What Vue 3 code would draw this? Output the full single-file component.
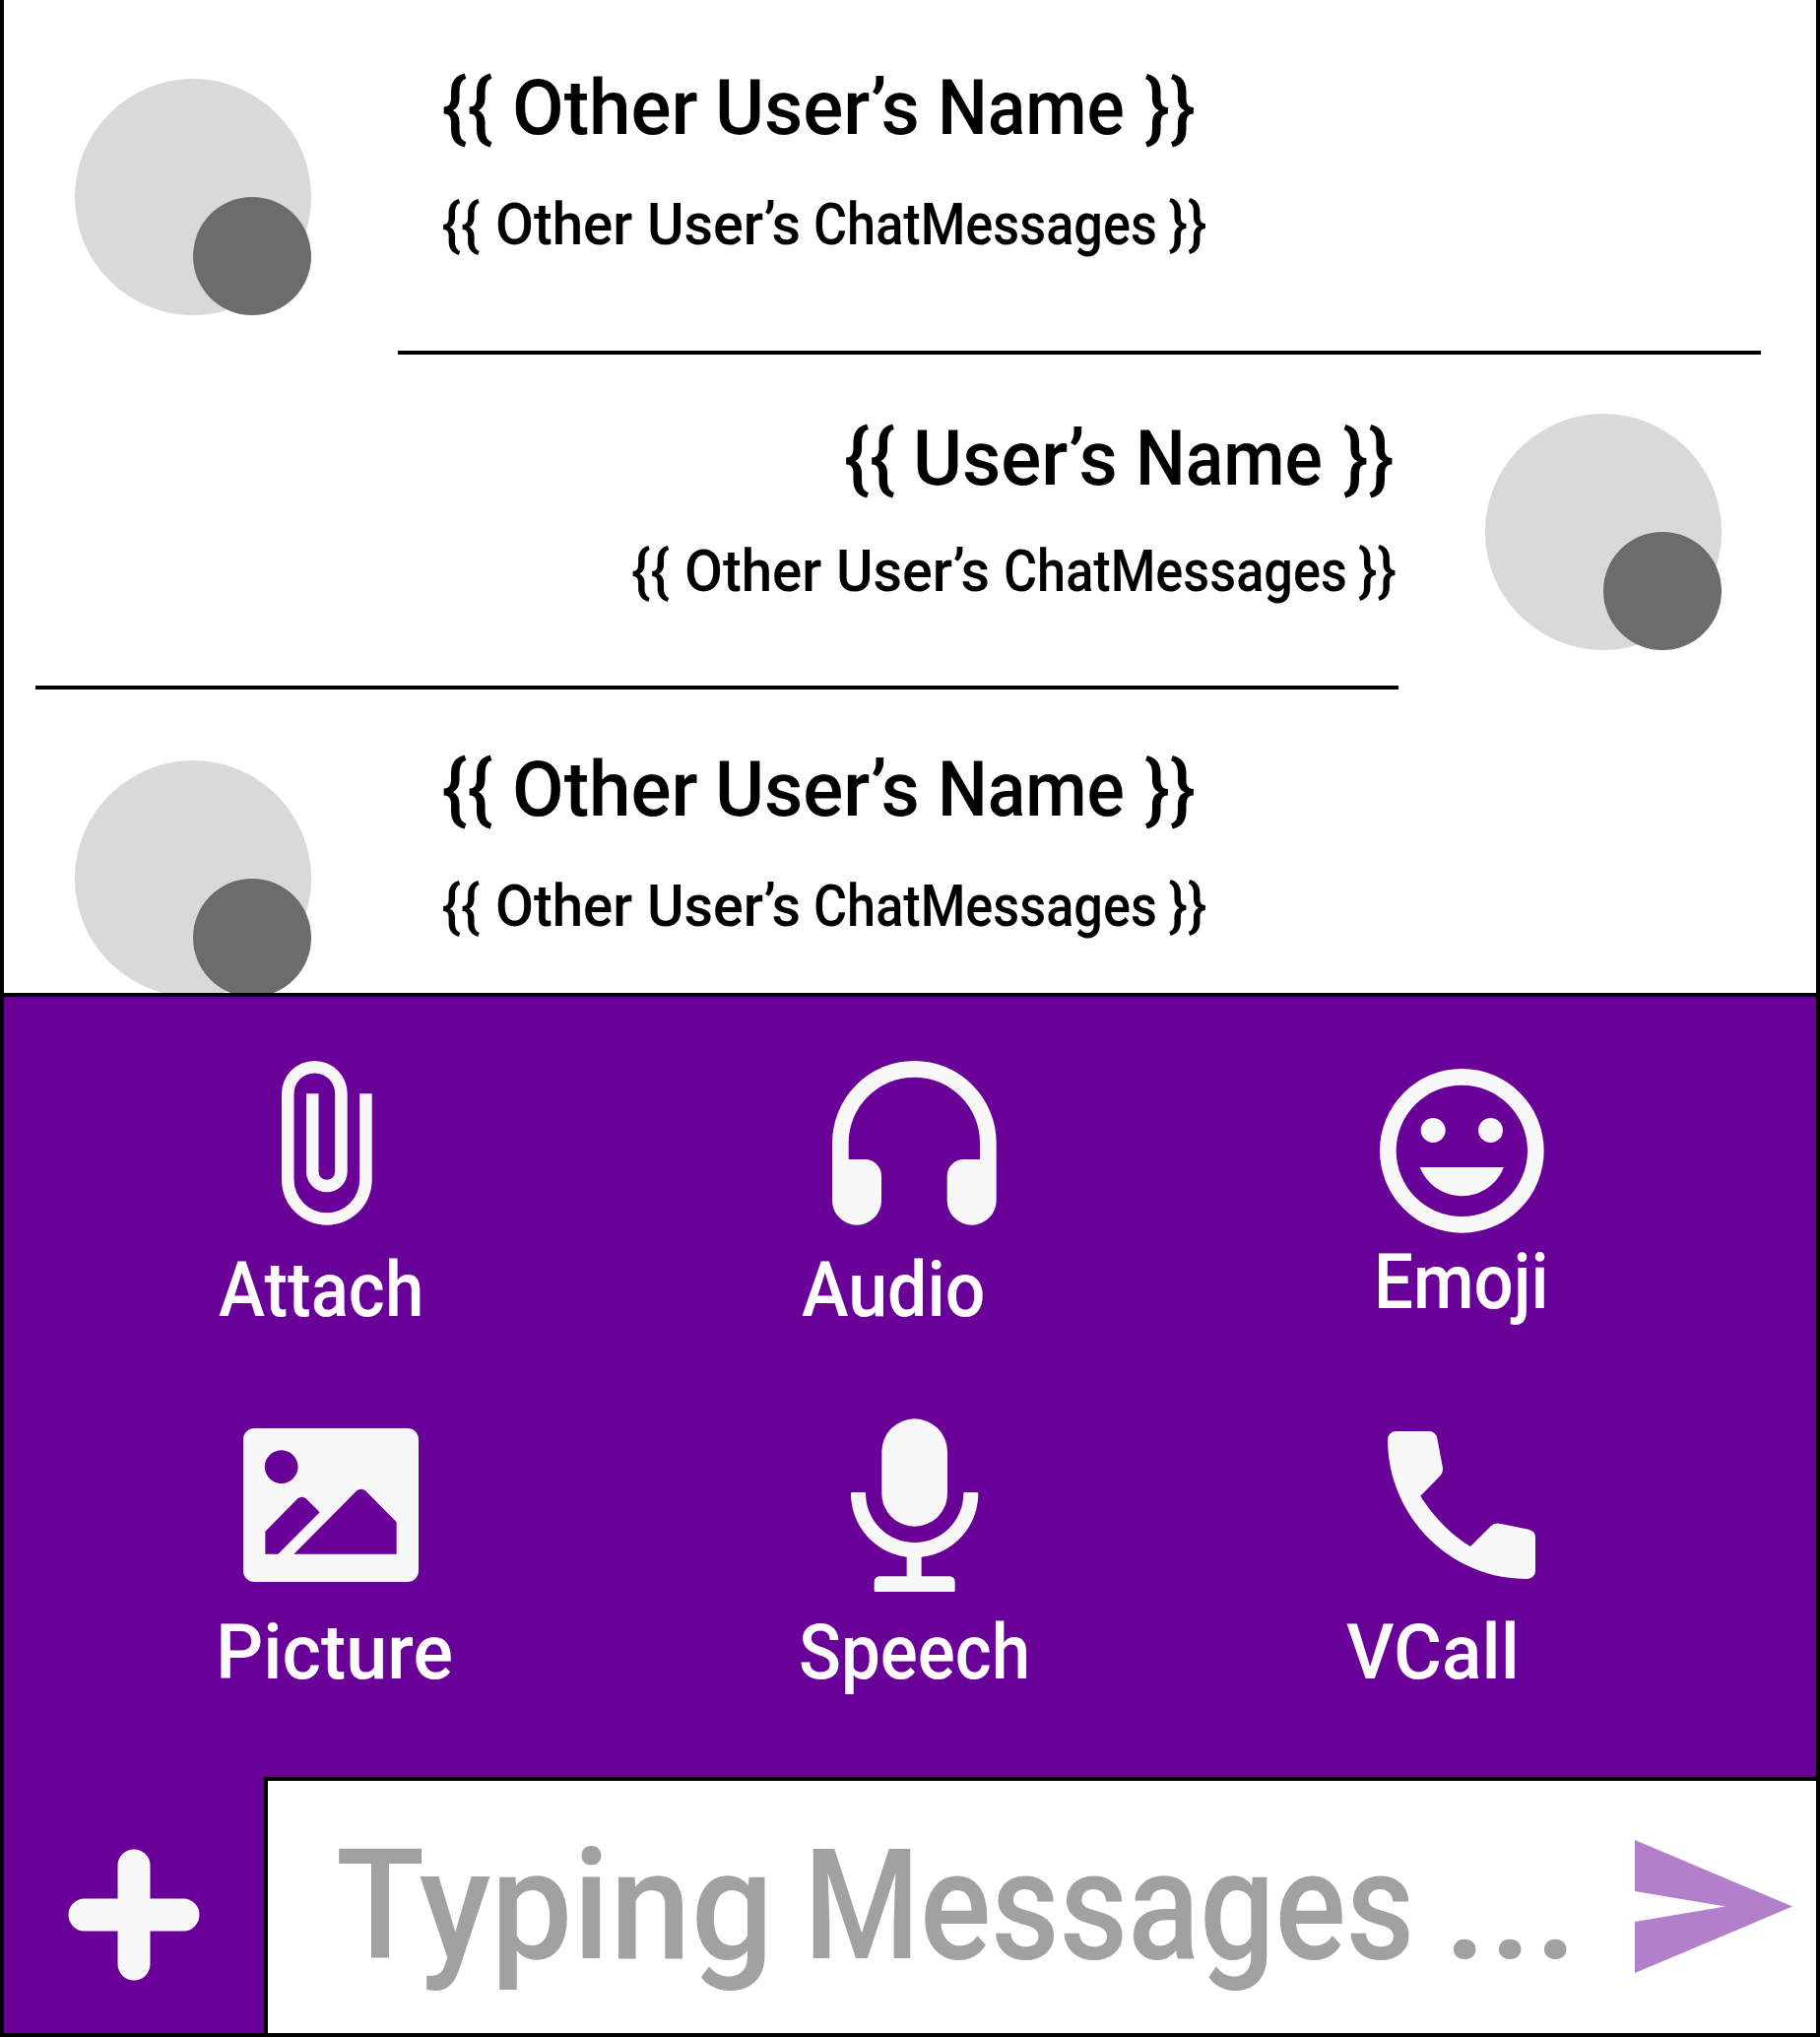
<script setup>
// Each word carries its advance in px and the horizontal condensing of its glyphs.
const word = (text, width, scale = 1) => ({ text, width, scale })

const otherName = [
  word('{{', 71),
  word('Other', 206.5, 0.98),
  word('User’s', 225.5, 0.98),
  word('Name', 210.5, 0.917),
  word('}}', 49),
]
const ownName = [
  word('{{', 70),
  word('User’s', 226, 0.98),
  word('Name', 210.5, 0.917),
  word('}}', 49),
]
const chatText = [
  word('{{', 54),
  word('Other', 154, 0.965),
  word('User’s', 169.5, 0.98),
  word('ChatMessages', 360.5, 0.893),
  word('}}', 37),
]
const placeholder = [
  word('Typing', 475, 0.949),
  word('Messages', 649, 0.865),
  word('...', 190, 1.06),
]

const messages = [
  { id: 1, side: 'theirs', slot: 'first', name: otherName, text: chatText, divider: true },
  { id: 2, side: 'mine', slot: 'second', name: ownName, text: chatText, divider: true },
  { id: 3, side: 'theirs', slot: 'third', name: otherName, text: chatText, divider: false },
]

const wordStyle = (w) => ({ width: w.width + 'px', '--condense': w.scale })
</script>

<template>
  <div class="app">
    <main class="chat">
      <template v-for="m in messages" :key="m.id">
        <article class="message" :class="[m.side, m.slot]">
          <div class="avatar"><span class="status"></span></div>
          <div class="body">
            <h2 class="name line">
              <span v-for="(w, i) in m.name" :key="i" class="word" :style="wordStyle(w)"><span class="glyphs">{{ w.text }}</span></span>
            </h2>
            <p class="text line">
              <span v-for="(w, i) in m.text" :key="i" class="word" :style="wordStyle(w)"><span class="glyphs">{{ w.text }}</span></span>
            </p>
          </div>
        </article>
        <hr v-if="m.divider" class="divider" :class="m.side" />
      </template>
    </main>

    <section class="tools">
      <button class="tool attach">
        <svg class="icon" width="91.7" height="166.7" viewBox="0 0 11 20">
          <path d="M9.500 4v10.500a4 4 0 0 1-8 0V4a2.500 2.500 0 0 1 5 0v9.500a1 1 0 0 1-2 0V4H3v9.500a2.500 2.500 0 0 0 5 0V4a4 4 0 0 0-8 0v10.500a5.500 5.500 0 0 0 11 0V4z" />
        </svg>
        <span class="label">Attach</span>
      </button>
      <button class="tool audio">
        <svg class="icon" width="166.7" height="166.7" viewBox="0 0 20 20">
          <path d="M10 0A10 10 0 0 0 0 10v7a3 3 0 0 0 6 0v-3a2 2 0 0 0-2-2H2v-2a8 8 0 0 1 16 0v2h-2a2 2 0 0 0-2 2v3a3 3 0 0 0 6 0v-7A10 10 0 0 0 10 0z" />
        </svg>
        <span class="label">Audio</span>
      </button>
      <button class="tool emoji">
        <svg class="icon" width="166.7" height="166.7" viewBox="0 0 20 20">
          <path fill-rule="evenodd" d="M10 0a10 10 0 1 0 0 20a10 10 0 0 0 0-20zM10 2a8 8 0 1 1 0 16a8 8 0 0 1 0-16z" />
          <circle cx="6.500" cy="7.500" r="1.500" />
          <circle cx="13.500" cy="7.500" r="1.500" />
          <path d="M10 15.500c2.330 0 4.310-1.460 5.110-3.500H4.890c.8 2.040 2.780 3.500 5.110 3.500z" />
        </svg>
        <span class="label">Emoji</span>
      </button>
      <button class="tool picture">
        <svg class="icon" width="178" height="156" viewBox="0 0 534 468">
          <path fill-rule="evenodd" d="M34 0H500a34 34 0 0 1 34 34V434a34 34 0 0 1-34 34H34a34 34 0 0 1-34-34V34A34 34 0 0 1 34 0zM116 67a50.500 50.500 0 1 0 .1 0zM67 314V383H106L233 256L191 214Q179 204 166 214zM154 383H467V286L372 190Q359 180 346 190z" />
        </svg>
        <span class="label">Picture</span>
      </button>
      <button class="tool speech">
        <svg class="icon" width="129.3" height="176" viewBox="0 0 388 528">
          <rect x="94" y="1" width="200" height="328" rx="100" />
          <path d="M4 225H42Q45 225 45 229A149 149 0 0 0 343 229Q343 225 346 225H384Q388 225 388 229A194 194 0 0 1 215 422V481H301a16 16 0 0 1 16 16V524a4 4 0 0 1-4 4H75a4 4 0 0 1-4-4V497a16 16 0 0 1 16-16H170V422A194 194 0 0 1 0 229Q0 225 4 225z" />
        </svg>
        <span class="label">Speech</span>
      </button>
      <button class="tool vcall">
        <svg class="icon" width="150" height="150" viewBox="0 0 450 450">
          <path d="M0 25A25 25 0 0 1 25 0H127A25 25 0 0 1 151 22L168 112Q169 125 161 135L100 197C138 260 190 312 252 351L313 290Q324 279 339 281L430 299Q450 304 450 323V425A25 25 0 0 1 425 450C185 450 0 255 0 25z" />
        </svg>
        <span class="label">VCall</span>
      </button>
    </section>

    <footer class="composer">
      <button class="add">
        <svg class="icon" width="134" height="134" viewBox="0 0 134 134">
          <path d="M50.500 17a16.500 16.500 0 0 1 33 0V50.500H117a16.500 16.500 0 0 1 0 33H83.500V117a16.500 16.500 0 0 1-33 0V83.500H17a16.500 16.500 0 0 1 0-33H50.500z" />
        </svg>
      </button>
      <div class="field">
        <div class="placeholder line">
          <span v-for="(w, i) in placeholder" :key="i" class="word" :style="wordStyle(w)"><span class="glyphs">{{ w.text }}</span></span>
        </div>
        <svg class="send" width="160" height="135" viewBox="0 0 160 135">
          <path d="M0 0L160 67.500L0 135V83L92 67.500L0 52z" />
        </svg>
      </div>
    </footer>
  </div>
</template>

<style>
body {
  margin: 0;
  background: #fff;
}
</style>

<style scoped>
.app {
  box-sizing: border-box;
  width: 1848px;
  height: 2068px;
  border: 4px solid #000;
  border-top: 0;
  display: flex;
  flex-direction: column;
  overflow: hidden;
  background: #fff;
  color: #000;
  font-family: Roboto, "Open Sans", sans-serif;
  font-weight: 500;
}
.chat {
  height: 1008px;
  flex: none;
  overflow: hidden;
}
.message {
  display: flex;
  box-sizing: border-box;
  align-items: flex-start;
}
.message.first { height: 356px; padding-top: 70px; }
.message.second { height: 336px; padding-top: 60px; }
.message.third { height: 312px; padding-top: 62px; }
.theirs { padding-left: 72px; }
.mine { flex-direction: row-reverse; padding-right: 96px; }
.avatar {
  width: 240px;
  height: 240px;
  flex: none;
  border-radius: 50%;
  background: #d9d9d9;
  display: flex;
  align-items: flex-end;
  justify-content: flex-end;
}
.first .avatar, .third .avatar { margin-top: 10px; }
.status {
  width: 120px;
  height: 120px;
  border-radius: 50%;
  background: #6c6c6c;
}
.body {
  display: flex;
  flex-direction: column;
  gap: 48px;
  white-space: nowrap;
}
.theirs .body { margin-left: 132.5px; }
.mine .body { margin-right: 92px; align-items: flex-end; gap: 44px; margin-top: 6px; }
.line { display: flex; }
.word { display: block; flex: none; }
.glyphs {
  display: inline-block;
  transform: scaleX(var(--condense));
  transform-origin: 0 50%;
}
.name, .text { margin: 0; font-weight: 500; }
.name { font-size: 78px; line-height: 80px; height: 80px; }
.mine .name { margin-right: 3.500px; }
.text { font-size: 58.5px; line-height: 60px; height: 60px; }
.divider {
  width: 1384px;
  height: 4px;
  margin: 0 0 0 32px;
  padding: 0;
  border: 0;
  background: #000;
}
.divider.theirs { margin-left: 400px; }

.tools {
  box-sizing: border-box;
  height: 796px;
  flex: none;
  border-top: 4px solid #000;
  background: #690098;
  display: grid;
  grid-template-columns: 590px 560px 690px;
  grid-template-rows: 364px 428px;
}
button {
  border: 0;
  padding: 0;
  background: none;
  font: inherit;
  color: inherit;
}
.tool {
  display: flex;
  flex-direction: column;
  align-items: flex-start;
}
.icon { fill: #f8f8f8; display: block; flex: none; overflow: visible; }
.label {
  color: #fff;
  font-size: 78px;
  line-height: 80px;
  height: 80px;
  white-space: nowrap;
  transform-origin: 0 50%;
}
.attach .icon { margin: 64.6px 0 0 282.3px; }
.attach .label { margin: 26.7px 0 0 218px; transform: scaleX(0.909); }
.audio .icon { margin: 64.6px 0 0 251px; }
.audio .label { margin: 26.7px 0 0 220px; transform: scaleX(0.919); }
.emoji .icon { margin: 72.6px 0 0 246.6px; }
.emoji .label { margin: 10.7px 0 0 241px; transform: scaleX(0.907); }
.picture .icon { margin: 74px 0 0 243px; }
.picture .label { margin: 32px 0 0 215px; transform: scaleX(0.97); }
.speech .icon { margin: 64px 0 0 270px; }
.speech .label { margin: 22px 0 0 216.500px; transform: scaleX(0.909); }
.vcall .icon { margin: 76.7px 0 0 255px; }
.vcall .label { margin: 35.300px 0 0 212.500px; transform: scaleX(0.963); }

.composer {
  height: 260px;
  flex: none;
  display: flex;
  background: #690098;
}
.add { width: 264px; flex: none; display: flex; }
.add .icon { margin: 73px 0 0 65px; }
.field {
  box-sizing: border-box;
  flex: 1;
  border-top: 4px solid #000;
  border-left: 4px solid #000;
  background: #fff;
  display: flex;
  align-items: flex-start;
}
.placeholder {
  width: 1319px;
  flex: none;
  margin: 47px 0 0 69px;
  color: #a1a1a1;
  font-size: 156px;
  line-height: 160px;
  height: 160px;
  white-space: nowrap;
}
.send { fill: #b27fcb; margin-top: 60px; flex: none; }
</style>
